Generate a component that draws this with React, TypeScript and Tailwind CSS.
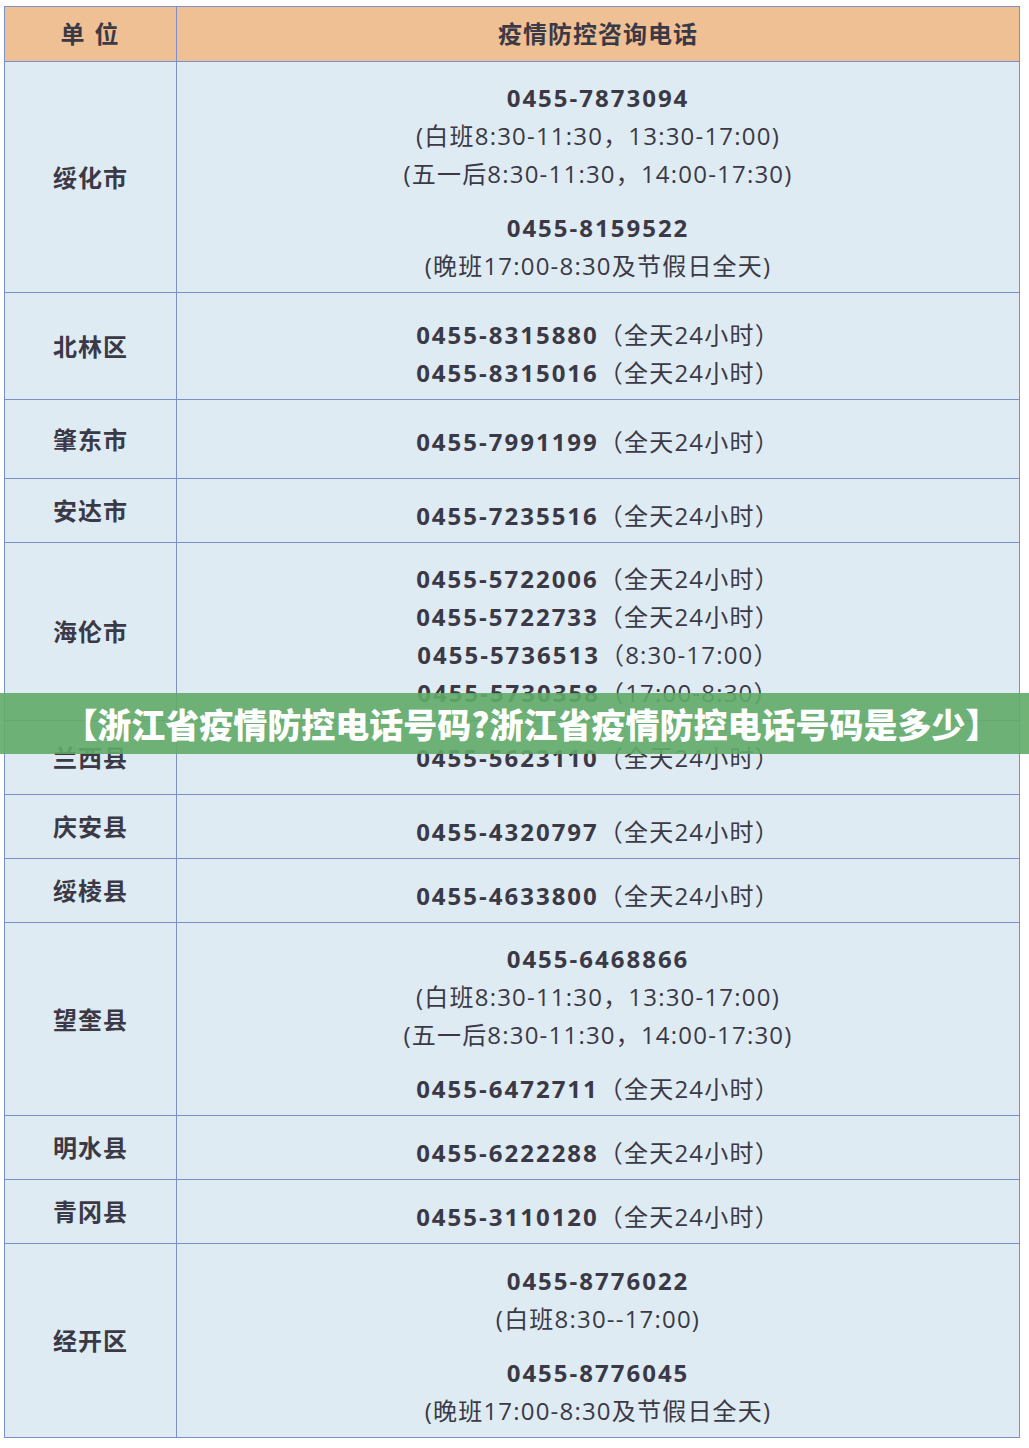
import React from "react";

type Line = { num?: string; note?: string; gap?: boolean };
type Row = { name: string; h: number; pt?: number; lines: Line[] };

const rows: Row[] = [
  {
    name: "绥化市",
    h: 231,
    lines: [
      { num: "0455-7873094" },
      { note: "(白班8:30-11:30，13:30-17:00)" },
      { note: "(五一后8:30-11:30，14:00-17:30)" },
      { num: "0455-8159522", gap: true },
      { note: "(晚班17:00-8:30及节假日全天)" },
    ],
  },
  {
    name: "北林区",
    h: 107,
    pt: 16,
    lines: [
      { num: "0455-8315880", note: "（全天24小时）" },
      { num: "0455-8315016", note: "（全天24小时）" },
    ],
  },
  { name: "肇东市", h: 79, pt: 6, lines: [{ num: "0455-7991199", note: "（全天24小时）" }] },
  { name: "安达市", h: 64, lines: [{ num: "0455-7235516", note: "（全天24小时）" }] },
  {
    name: "海伦市",
    h: 178,
    pt: 8,
    lines: [
      { num: "0455-5722006", note: "（全天24小时）" },
      { num: "0455-5722733", note: "（全天24小时）" },
      { num: "0455-5736513", note: "（8:30-17:00）" },
      { num: "0455-5730358", note: "（17:00-8:30）" },
    ],
  },
  { name: "兰西县", h: 74, pt: 0, lines: [{ num: "0455-5623110", note: "（全天24小时）" }] },
  { name: "庆安县", h: 64, lines: [{ num: "0455-4320797", note: "（全天24小时）" }] },
  { name: "绥棱县", h: 64, lines: [{ num: "0455-4633800", note: "（全天24小时）" }] },
  {
    name: "望奎县",
    h: 193,
    lines: [
      { num: "0455-6468866" },
      { note: "(白班8:30-11:30，13:30-17:00)" },
      { note: "(五一后8:30-11:30，14:00-17:30)" },
      { num: "0455-6472711", note: "（全天24小时）", gap: true },
    ],
  },
  { name: "明水县", h: 64, lines: [{ num: "0455-6222288", note: "（全天24小时）" }] },
  { name: "青冈县", h: 64, lines: [{ num: "0455-3110120", note: "（全天24小时）" }] },
  {
    name: "经开区",
    h: 193,
    lines: [
      { num: "0455-8776022" },
      { note: "(白班8:30--17:00)" },
      { num: "0455-8776045", gap: true },
      { note: "(晚班17:00-8:30及节假日全天)" },
    ],
  },
];

const font = "font-['Open_Sans','Noto_Sans_CJK_SC',sans-serif]";

export default function App() {
  return (
    <div className={`relative w-[1029px] h-[1448px] bg-white pt-[6px] pl-[4px] text-[#3b3945] ${font}`}>
      <div className="w-[1016px] border border-[#7b90c6]">
        <div className="flex h-[55px] bg-[#efc094] border-b border-[#7b90c6] text-[24px] font-bold">
          <div className="w-[172px] border-r border-[#7b90c6] flex items-center justify-center tracking-[2px]">
            单 位
          </div>
          <div className="flex-1 flex items-center justify-center tracking-[1px]">疫情防控咨询电话</div>
        </div>
        {rows.map((r, i) => (
          <div
            key={r.name}
            style={{ height: r.h }}
            className={`flex bg-[#deebf3] ${i < rows.length - 1 ? "border-b border-[#7b90c6]" : ""}`}
          >
            <div className="w-[172px] border-r border-[#7b90c6] flex items-center justify-center pt-[1px] text-[24px] font-bold tracking-[1px]">
              {r.name}
            </div>
            <div
              style={{ paddingTop: r.pt ?? 10 }}
              className="flex-1 flex flex-col items-center justify-center"
            >
              {r.lines.map((l, j) => (
                <div key={j} className={`leading-[38px] text-[24px] whitespace-nowrap ${l.gap ? "mt-[16px]" : ""}`}>
                  {l.num && <span className="font-bold tracking-[2px]">{l.num}</span>}
                  {l.note && <span className="tracking-[1.2px]">{l.note}</span>}
                </div>
              ))}
            </div>
          </div>
        ))}
      </div>
      <div className="absolute left-0 top-[693px] w-[1029px] h-[61px] bg-[#62ab68]/90 flex items-center justify-center pl-[34px]">
        <span className="text-white text-[34px] font-black font-['Noto_Sans_CJK_SC',sans-serif] leading-none">
          【浙江省疫情防控电话号码?浙江省疫情防控电话号码是多少】
        </span>
      </div>
    </div>
  );
}
